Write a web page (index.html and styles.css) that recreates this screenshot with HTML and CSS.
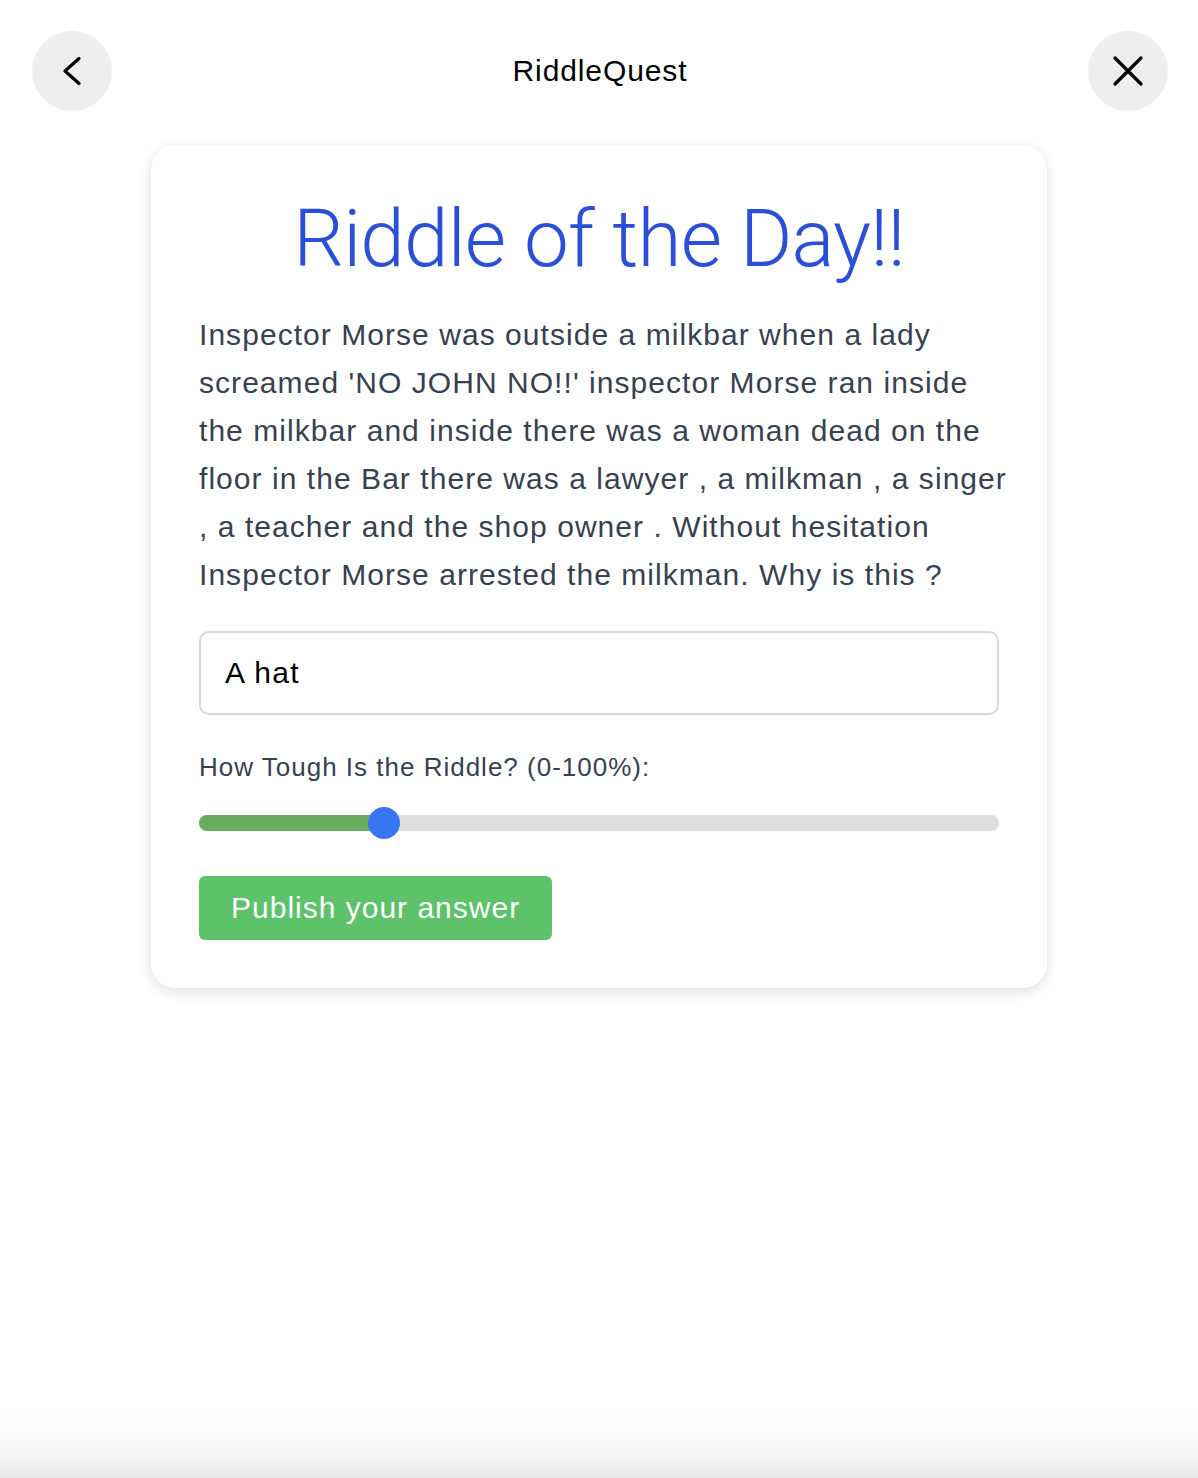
FILE: index.html
```html
<!DOCTYPE html>
<html lang="en">
<head>
<meta charset="utf-8">
<title>RiddleQuest</title>
<link rel="stylesheet" href="styles.css">
</head>
<body>
<div class="page">
  <header class="topbar">
    <button class="circle-btn" aria-label="Back">
      <svg width="28" height="28" viewBox="0 0 28 28"><path d="M21 1.5 L7 14 L21 26.5" fill="none" stroke="#000" stroke-width="3.2" stroke-linecap="round" stroke-linejoin="round"/></svg>
    </button>
    <div class="brand">RiddleQuest</div>
    <button class="circle-btn" aria-label="Close">
      <svg width="32" height="32" viewBox="0 0 32 32"><path d="M3 3 L29 29 M29 3 L3 29" fill="none" stroke="#000" stroke-width="3.2" stroke-linecap="round"/></svg>
    </button>
  </header>
  <main class="card">
    <h1 class="title">Riddle of the Day!!</h1>
    <p class="riddle">Inspector Morse was outside a milkbar when a lady screamed 'NO JOHN NO!!' inspector Morse ran inside the milkbar and inside there was a woman dead on the floor in the Bar there was a lawyer , a milkman , a singer , a teacher and the shop owner . Without hesitation Inspector Morse arrested the milkman. Why is this ?</p>
    <div class="answer">A hat</div>
    <div class="label">How Tough Is the Riddle? (0-100%):</div>
    <div class="slider">
      <div class="fill" style="width:23.1%"></div>
      <div class="thumb" style="left:23.1%"></div>
    </div>
    <div class="actions">
      <button class="publish">Publish your answer</button>
    </div>
  </main>
  <div class="spacer"></div>
  <div class="bottom-fade"></div>
</div>
</body>
</html>
```
FILE: styles.css
```css
* { box-sizing: border-box; }
html, body { margin: 0; padding: 0; }
body {
  font-family: "Liberation Sans", Arial, sans-serif;
  background: #fff;
  color: #374151;
}
.page {
  min-height: 1478px;
  display: flex;
  flex-direction: column;
}
.topbar {
  display: flex;
  justify-content: space-between;
  align-items: flex-start;
  padding: 31px 30px 0 32px;
  height: 142px;
}
.circle-btn {
  width: 80px;
  height: 80px;
  border-radius: 50%;
  border: none;
  background: #eeeeee;
  display: flex;
  align-items: center;
  justify-content: center;
  padding: 0;
}
.brand {
  font-size: 30px;
  color: #000;
  line-height: 80px;
  letter-spacing: 0.9px;
}
.card {
  width: 896px;
  margin: 3px auto 0;
  background: #fff;
  border-radius: 24px;
  box-shadow: 0 4px 14px rgba(0,0,0,0.12), 0 0 2px rgba(0,0,0,0.03);
  padding: 46px 48px 48px;
}
.title {
  margin: 0;
  text-align: center;
  font-family: Roboto, "Liberation Sans", sans-serif;
  font-weight: 300;
  font-size: 80px;
  line-height: 96px;
  color: #2b4fd6;
  letter-spacing: -0.8px;
}
.riddle {
  margin: 24px -18px 0 0;
  font-size: 30px;
  line-height: 48px;
  color: #374151;
  letter-spacing: 1.05px;
}
.answer {
  margin-top: 32px;
  height: 84px;
  border: 2px solid #d5d8dd;
  border-radius: 10px;
  padding: 0 24px;
  display: flex;
  align-items: center;
  font-size: 30px;
  color: #000;
  letter-spacing: 1.3px;
}
.label {
  margin-top: 34px;
  font-size: 26px;
  line-height: 36px;
  letter-spacing: 1px;
}
.slider {
  position: relative;
  margin-top: 30px;
  height: 16px;
  border-radius: 8px;
  background: #dedede;
}
.fill {
  height: 100%;
  border-radius: 8px 0 0 8px;
  background: #68ac5d;
}
.thumb {
  position: absolute;
  top: 50%;
  width: 32px;
  height: 32px;
  border-radius: 50%;
  background: #3875f3;
  transform: translate(-50%, -50%);
}
.actions {
  margin-top: 45px;
  display: flex;
}
.publish {
  height: 64px;
  padding: 0 32px;
  border: none;
  border-radius: 6px;
  background: #5ec26b;
  color: #fff;
  font-family: "Liberation Sans", Arial, sans-serif;
  font-size: 30px;
  letter-spacing: 1px;
}
.spacer { flex: 1; }
.bottom-fade {
  height: 80px;
  background: linear-gradient(to bottom, #ffffff, #fcfcfc 40%, #f4f4f4 75%, #e8e8e8);
}
```
